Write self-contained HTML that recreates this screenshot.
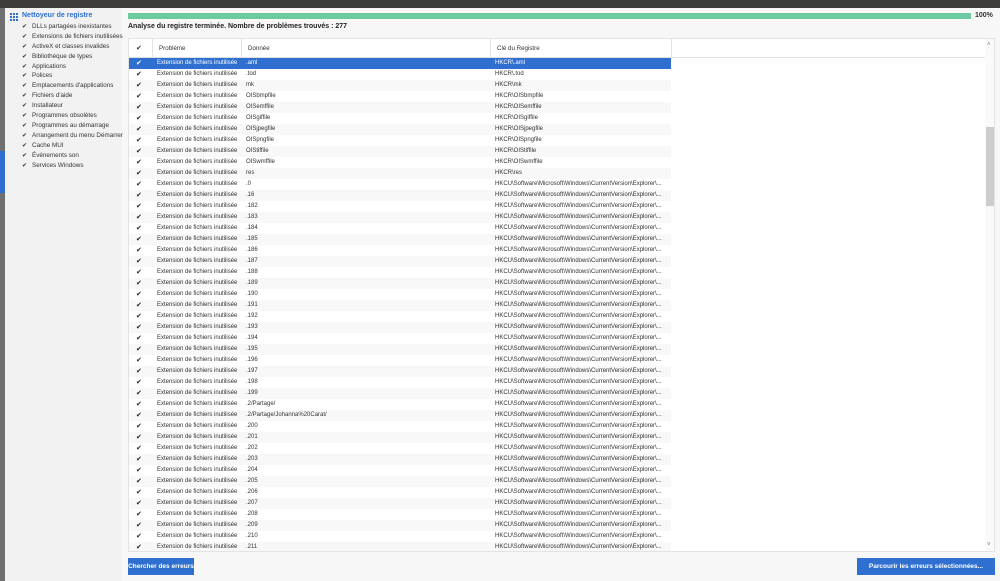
<!DOCTYPE html>
<html><head><meta charset="utf-8"><style>
*{margin:0;padding:0;box-sizing:border-box}
body{width:1000px;height:581px;overflow:hidden;background:#f7f7f7;font-family:"Liberation Sans",sans-serif;position:relative;color:#333}
#top{position:absolute;left:0;top:0;width:1000px;height:8px;background:#3e3b3b}
#strip{position:absolute;left:0;top:8px;width:5px;height:573px;background:#707070}
#strip i{position:absolute;left:0;top:143px;width:5px;height:42px;background:#2f6fd0}
#side{position:absolute;left:5px;top:8px;width:117px;height:573px;background:#f2f2f2}
#side .h{position:absolute;left:5px;top:4px;font-size:7px;font-weight:bold;color:#2f6fd0}
#side .g{position:absolute;left:5px;top:5px;width:8px;height:8px;background:
linear-gradient(90deg,#2f6fd0 2px,transparent 2px,transparent 3px,#2f6fd0 3px,#2f6fd0 5px,transparent 5px,transparent 6px,#2f6fd0 6px)}
#side .g:after{content:"";position:absolute;left:0;top:2px;width:8px;height:1px;background:#f2f2f2;box-shadow:0 3px 0 #f2f2f2}
.si{position:absolute;left:17px;font-size:6.3px;color:#333;white-space:nowrap}
.si b{font-weight:normal;margin-right:5px;font-size:6px}
#pb{position:absolute;left:128px;top:13px;width:843px;height:6px;background:#6ccaa0}
#pct{position:absolute;left:975px;top:12px;font-size:7px;font-weight:bold;color:#333}
#msg{position:absolute;left:128px;top:23px;font-size:7px;font-weight:bold;color:#222}
#tbl{position:absolute;left:128px;top:38px;width:867px;height:514px;background:#fff;border:1px solid #e3e3e3;overflow:hidden}
#hd{position:absolute;left:0;top:0;width:856px;height:19px;border-bottom:1px solid #e0e0e0}
.c{position:absolute;font-size:6.2px;white-space:nowrap}
.vl{position:absolute;top:0;width:1px;height:19px;background:#e3e3e3}
.r{position:absolute;left:0;width:542px;height:11px}
.r.a{background:#f8f8f8}
.r.s{background:#2f6fd0;color:#fff}
.r span{position:absolute;top:2px;font-size:6px;white-space:nowrap}
.ck{left:7px;font-size:7px!important;top:1px!important;color:#222}
.s .ck{color:#fff}
.p{left:28px}.d{left:117px}.k{left:366px}
#sb{position:absolute;left:856px;top:0;width:10px;height:512px;background:#fafafa}
#th{position:absolute;left:857px;top:88px;width:9px;height:79px;background:#cdcdcd}
.ar{position:absolute;left:858px;font-size:6px;color:#777}
.btn{position:absolute;top:558px;height:17px;background:#2f6fd0;color:#fff;font-size:6.5px;font-weight:bold;line-height:17px;text-align:center}
</style></head><body>
<div id="top"></div>
<div id="strip"><i></i></div>
<div id="side">
<div class="g"></div><div class="h" style="left:17px">Nettoyeur de registre</div>
<div class="si" style="top:15px"><b>✔</b>DLLs partagées inexistantes</div>
<div class="si" style="top:25px"><b>✔</b>Extensions de fichiers inutilisées</div>
<div class="si" style="top:35px"><b>✔</b>ActiveX et classes invalides</div>
<div class="si" style="top:45px"><b>✔</b>Bibliothèque de types</div>
<div class="si" style="top:55px"><b>✔</b>Applications</div>
<div class="si" style="top:64px"><b>✔</b>Polices</div>
<div class="si" style="top:74px"><b>✔</b>Emplacements d'applications</div>
<div class="si" style="top:84px"><b>✔</b>Fichiers d'aide</div>
<div class="si" style="top:94px"><b>✔</b>Installateur</div>
<div class="si" style="top:104px"><b>✔</b>Programmes obsolètes</div>
<div class="si" style="top:114px"><b>✔</b>Programmes au démarrage</div>
<div class="si" style="top:124px"><b>✔</b>Arrangement du menu Démarrer</div>
<div class="si" style="top:134px"><b>✔</b>Cache MUI</div>
<div class="si" style="top:144px"><b>✔</b>Événements son</div>
<div class="si" style="top:154px"><b>✔</b>Services Windows</div>
</div>
<div id="pb"></div><div id="pct">100%</div>
<div id="msg">Analyse du registre terminée. Nombre de problèmes trouvés : 277</div>
<div id="tbl">
<div id="hd">
<span class="c" style="left:7px;top:5px;font-size:7px">✔</span>
<div class="vl" style="left:23px"></div>
<span class="c" style="left:30px;top:6px">Problème</span>
<div class="vl" style="left:112px"></div>
<span class="c" style="left:119px;top:6px">Donnée</span>
<div class="vl" style="left:361px"></div>
<span class="c" style="left:368px;top:6px">Clé du Registre</span>
<div class="vl" style="left:542px"></div>
</div>
<div id="rows"></div>
<div id="sb"></div><div id="th"></div>
<div class="ar" style="top:3px">˄</div><div class="ar" style="top:503px">˅</div>
</div>
<div class="btn" style="left:128px;width:66px">Chercher des erreurs</div>
<div class="btn" style="left:857px;width:138px">Parcourir les erreurs sélectionnées...</div>
<script>
var d=[".aml",".tod","mk","OISbmpfile","OISemffile","OISgiffile","OISjpegfile","OISpngfile","OIStiffile","OISwmffile","res"];
var k=["HKCR\\.aml","HKCR\\.tod","HKCR\\mk","HKCR\\OISbmpfile","HKCR\\OISemffile","HKCR\\OISgiffile","HKCR\\OISjpegfile","HKCR\\OISpngfile","HKCR\\OIStiffile","HKCR\\OISwmffile","HKCR\\res"];
var x=[".0",".16"];for(var i=182;i<=199;i++)x.push("."+i);x.push(".2/Partage/",".2/Partage/Johanna%20Carat/");for(i=200;i<=211;i++)x.push("."+i);
x.forEach(function(v){d.push(v);k.push("HKCU\\Software\\Microsoft\\Windows\\CurrentVersion\\Explorer\\...")});
var h="";for(i=0;i<d.length;i++){h+='<div class="r'+(i==0?' s':(i%2?'':' a'))+'" style="top:'+(19+i*11)+'px"><span class="ck">✔</span><span class="p">Extension de fichiers inutilisée</span><span class="d">'+d[i]+'</span><span class="k">'+k[i]+'</span></div>'}
document.getElementById("rows").innerHTML=h;
</script>
</body></html>
